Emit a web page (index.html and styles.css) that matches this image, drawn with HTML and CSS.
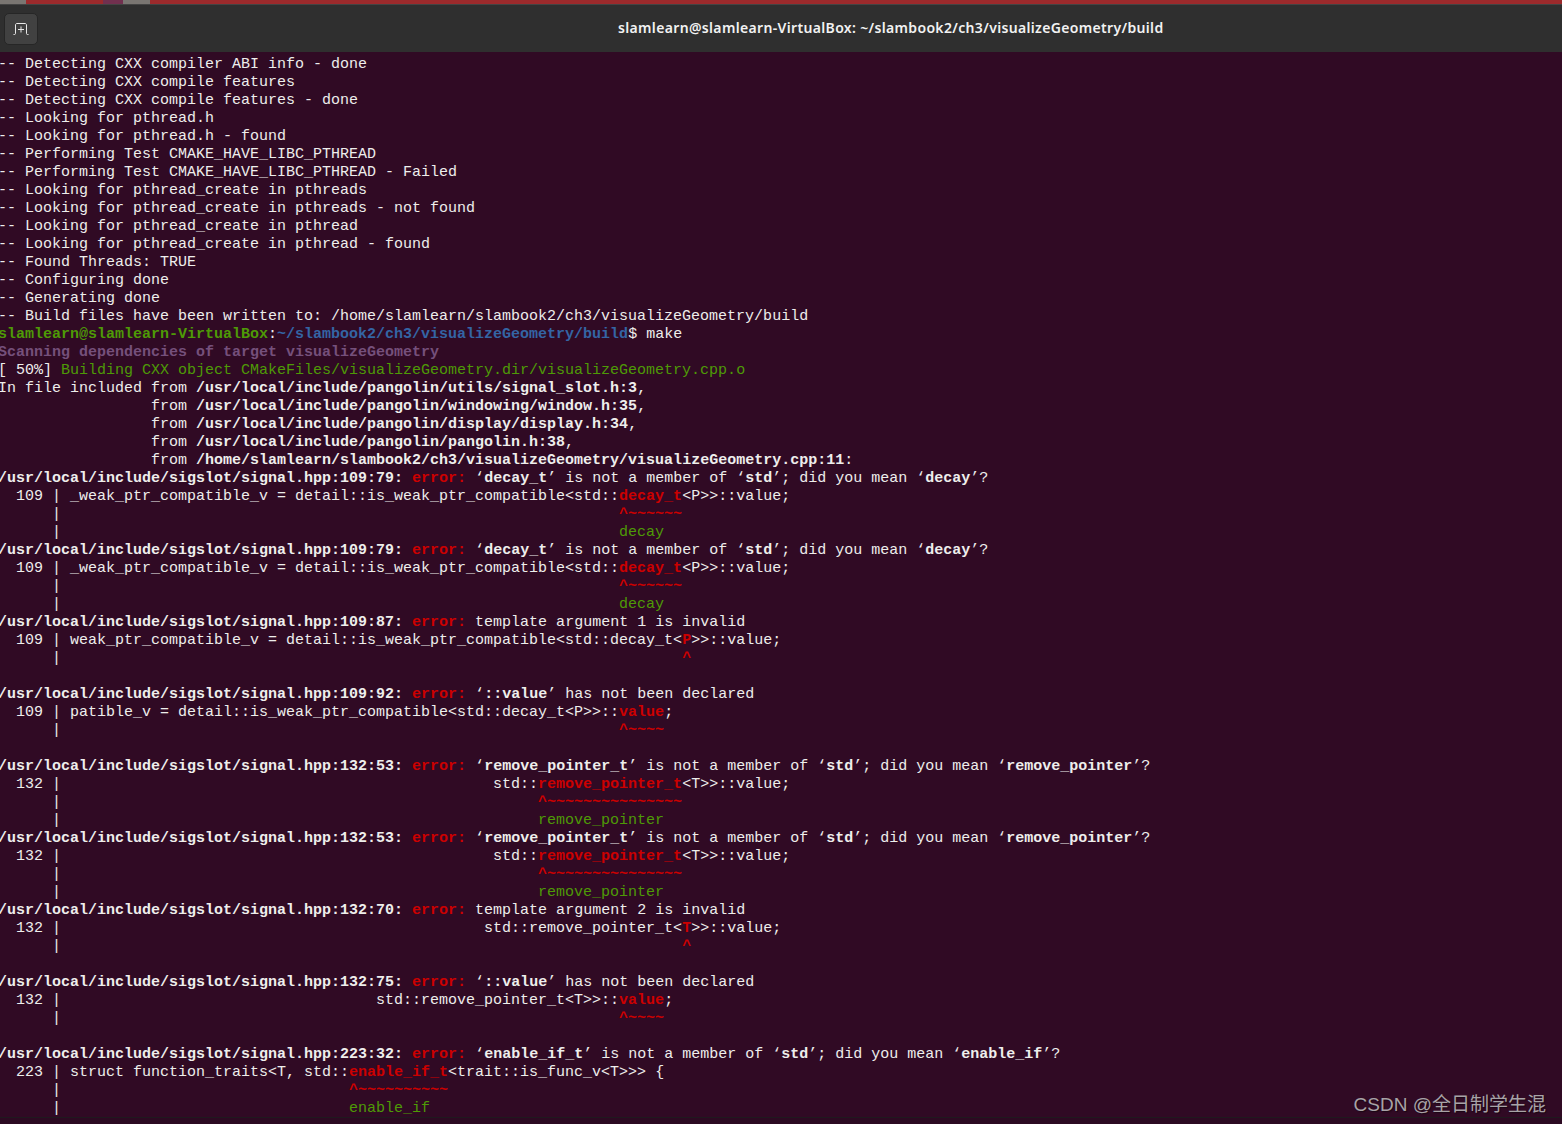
FILE: index.html
```html
<!DOCTYPE html>
<html lang="en">
<head>
  <meta charset="UTF-8">
  <title>slamlearn@slamlearn-VirtualBox: ~/slambook2/ch3/visualizeGeometry/build</title>
  <link rel="stylesheet" href="styles.css">
</head>
<body>
  <div class="desktop-strip">
    <div class="strip-tab strip-tab-a"></div>
    <div class="strip-gap strip-gap-a"></div>
    <div class="strip-mauve"></div>
    <div class="strip-tab strip-tab-b"></div>
  </div>
  <div class="titlebar">
    <button class="new-tab">
      <svg width="16" height="12" viewBox="0 0 16 12" fill="none" stroke="#e8e8e8" stroke-width="1">
        <path d="M0.5 11.500h1c0.600 0 1-0.400 1-1V2c0-0.900 0.600-1.500 1.500-1.500h8c0.900 0 1.500 0.600 1.500 1.500v8.500c0 0.600 0.400 1 1 1h1"/>
        <path d="M8 3.500v6M5 6.500h6"/>
      </svg>
    </button>
    <div class="title">slamlearn@slamlearn-VirtualBox: ~/slambook2/ch3/visualizeGeometry/build</div>
  </div>
  <div class="term">
    <div class="line">-- Detecting CXX compiler ABI info - done</div>
    <div class="line">-- Detecting CXX compile features</div>
    <div class="line">-- Detecting CXX compile features - done</div>
    <div class="line">-- Looking for pthread.h</div>
    <div class="line">-- Looking for pthread.h - found</div>
    <div class="line">-- Performing Test CMAKE_HAVE_LIBC_PTHREAD</div>
    <div class="line">-- Performing Test CMAKE_HAVE_LIBC_PTHREAD - Failed</div>
    <div class="line">-- Looking for pthread_create in pthreads</div>
    <div class="line">-- Looking for pthread_create in pthreads - not found</div>
    <div class="line">-- Looking for pthread_create in pthread</div>
    <div class="line">-- Looking for pthread_create in pthread - found</div>
    <div class="line">-- Found Threads: TRUE</div>
    <div class="line">-- Configuring done</div>
    <div class="line">-- Generating done</div>
    <div class="line">-- Build files have been written to: /home/slamlearn/slambook2/ch3/visualizeGeometry/build</div>
    <div class="line"><b class="green">slamlearn@slamlearn-VirtualBox</b>:<b class="blue">~/slambook2/ch3/visualizeGeometry/build</b>$ make</div>
    <div class="line"><b class="purple">Scanning dependencies of target visualizeGeometry</b></div>
    <div class="line">[ 50%] <span class="green">Building CXX object CMakeFiles/visualizeGeometry.dir/visualizeGeometry.cpp.o</span></div>
    <div class="line">In file included from <b>/usr/local/include/pangolin/utils/signal_slot.h:3</b>,</div>
    <div class="line">                 from <b>/usr/local/include/pangolin/windowing/window.h:35</b>,</div>
    <div class="line">                 from <b>/usr/local/include/pangolin/display/display.h:34</b>,</div>
    <div class="line">                 from <b>/usr/local/include/pangolin/pangolin.h:38</b>,</div>
    <div class="line">                 from <b>/home/slamlearn/slambook2/ch3/visualizeGeometry/visualizeGeometry.cpp:11</b>:</div>
    <div class="line"><b>/usr/local/include/sigslot/signal.hpp:109:79:</b> <b class="red">error:</b> ‘<b>decay_t</b>’ is not a member of ‘<b>std</b>’; did you mean ‘<b>decay</b>’?</div>
    <div class="line">  109 | _weak_ptr_compatible_v = detail::is_weak_ptr_compatible&lt;std::<b class="red">decay_t</b>&lt;P&gt;&gt;::value;</div>
    <div class="line">      |                                                              <b class="red">^~~~~~~</b></div>
    <div class="line">      |                                                              <span class="green">decay</span></div>
    <div class="line"><b>/usr/local/include/sigslot/signal.hpp:109:79:</b> <b class="red">error:</b> ‘<b>decay_t</b>’ is not a member of ‘<b>std</b>’; did you mean ‘<b>decay</b>’?</div>
    <div class="line">  109 | _weak_ptr_compatible_v = detail::is_weak_ptr_compatible&lt;std::<b class="red">decay_t</b>&lt;P&gt;&gt;::value;</div>
    <div class="line">      |                                                              <b class="red">^~~~~~~</b></div>
    <div class="line">      |                                                              <span class="green">decay</span></div>
    <div class="line"><b>/usr/local/include/sigslot/signal.hpp:109:87:</b> <b class="red">error:</b> template argument 1 is invalid</div>
    <div class="line">  109 | weak_ptr_compatible_v = detail::is_weak_ptr_compatible&lt;std::decay_t&lt;<b class="red">P</b>&gt;&gt;::value;</div>
    <div class="line">      |                                                                     <b class="red">^</b></div>
    <div class="line"></div>
    <div class="line"><b>/usr/local/include/sigslot/signal.hpp:109:92:</b> <b class="red">error:</b> ‘<b>::value</b>’ has not been declared</div>
    <div class="line">  109 | patible_v = detail::is_weak_ptr_compatible&lt;std::decay_t&lt;P&gt;&gt;::<b class="red">value</b>;</div>
    <div class="line">      |                                                              <b class="red">^~~~~</b></div>
    <div class="line"></div>
    <div class="line"><b>/usr/local/include/sigslot/signal.hpp:132:53:</b> <b class="red">error:</b> ‘<b>remove_pointer_t</b>’ is not a member of ‘<b>std</b>’; did you mean ‘<b>remove_pointer</b>’?</div>
    <div class="line">  132 |                                                std::<b class="red">remove_pointer_t</b>&lt;T&gt;&gt;::value;</div>
    <div class="line">      |                                                     <b class="red">^~~~~~~~~~~~~~~~</b></div>
    <div class="line">      |                                                     <span class="green">remove_pointer</span></div>
    <div class="line"><b>/usr/local/include/sigslot/signal.hpp:132:53:</b> <b class="red">error:</b> ‘<b>remove_pointer_t</b>’ is not a member of ‘<b>std</b>’; did you mean ‘<b>remove_pointer</b>’?</div>
    <div class="line">  132 |                                                std::<b class="red">remove_pointer_t</b>&lt;T&gt;&gt;::value;</div>
    <div class="line">      |                                                     <b class="red">^~~~~~~~~~~~~~~~</b></div>
    <div class="line">      |                                                     <span class="green">remove_pointer</span></div>
    <div class="line"><b>/usr/local/include/sigslot/signal.hpp:132:70:</b> <b class="red">error:</b> template argument 2 is invalid</div>
    <div class="line">  132 |                                               std::remove_pointer_t&lt;<b class="red">T</b>&gt;&gt;::value;</div>
    <div class="line">      |                                                                     <b class="red">^</b></div>
    <div class="line"></div>
    <div class="line"><b>/usr/local/include/sigslot/signal.hpp:132:75:</b> <b class="red">error:</b> ‘<b>::value</b>’ has not been declared</div>
    <div class="line">  132 |                                   std::remove_pointer_t&lt;T&gt;&gt;::<b class="red">value</b>;</div>
    <div class="line">      |                                                              <b class="red">^~~~~</b></div>
    <div class="line"></div>
    <div class="line"><b>/usr/local/include/sigslot/signal.hpp:223:32:</b> <b class="red">error:</b> ‘<b>enable_if_t</b>’ is not a member of ‘<b>std</b>’; did you mean ‘<b>enable_if</b>’?</div>
    <div class="line">  223 | struct function_traits&lt;T, std::<b class="red">enable_if_t</b>&lt;trait::is_func_v&lt;T&gt;&gt;&gt; {</div>
    <div class="line">      |                                <b class="red">^~~~~~~~~~~</b></div>
    <div class="line">      |                                <span class="green">enable_if</span></div>
  </div>
  <div class="term-foot"></div>
  <div class="watermark">CSDN @全日制学生混</div>
</body>
</html>
```

FILE: styles.css
```css
* {
  box-sizing: border-box;
}

html, body {
  margin: 0;
  padding: 0;
  height: 100%;
  overflow: hidden;
}

body {
  display: flex;
  flex-direction: column;
  position: relative;
  background-color: #300a24;
}

/* bit of wallpaper above the window */
.desktop-strip {
  display: flex;
  height: 4px;
  background-color: #9c2a2c;
  flex-shrink: 0;
}

.strip-tab {
  background-color: #7a7672;
}

.strip-tab-a {
  width: 26px;
}

.strip-gap-a {
  width: 77px;
}

.strip-mauve {
  width: 20px;
  background-color: #71304f;
}

.strip-tab-b {
  width: 27px;
}

.titlebar {
  height: 48px;
  flex-shrink: 0;
  display: flex;
  align-items: center;
  padding-left: 4px;
  background-color: #2f2f2f;
  border-top: 1px solid #444444;
}

.new-tab {
  width: 34px;
  height: 32px;
  flex-shrink: 0;
  display: flex;
  align-items: center;
  justify-content: center;
  padding: 0;
  background-color: #414141;
  border: 1px solid #262626;
  border-radius: 5px;
}

.title {
  margin-left: 580px;
  margin-bottom: 2px;
  font-family: "Noto Sans", sans-serif;
  font-size: 14px;
  font-weight: 600;
  letter-spacing: 0.34px;
  color: #f2f2f2;
  white-space: nowrap;
}

.term {
  flex: 1;
  min-height: 0;
  margin: 0 0 0 -2px;
  padding: 4px 0 0 0;
  overflow: hidden;
  font-family: "Liberation Mono", monospace;
  font-size: 15px;
  line-height: 18px;
  color: #eeeeec;
  background-color: #300a24;
}

.line {
  height: 18px;
  white-space: pre;
}

.line b {
  font-weight: 700;
}

.green {
  color: #4e9a06;
}

.blue {
  color: #3465a4;
}

.purple {
  color: #75507b;
}

.red {
  color: #cc0000;
}

.term-foot {
  height: 7px;
  flex-shrink: 0;
  background-color: #2c0a22;
  border-top: 1px solid #1f1a1e;
}

.watermark {
  position: absolute;
  right: 16px;
  bottom: 7px;
  font-family: "Liberation Sans", "Noto Sans CJK SC", sans-serif;
  font-size: 19px;
  line-height: 24px;
  color: #a8a3a7;
  text-shadow: 1px 1px 1px #1a0614;
}
```
